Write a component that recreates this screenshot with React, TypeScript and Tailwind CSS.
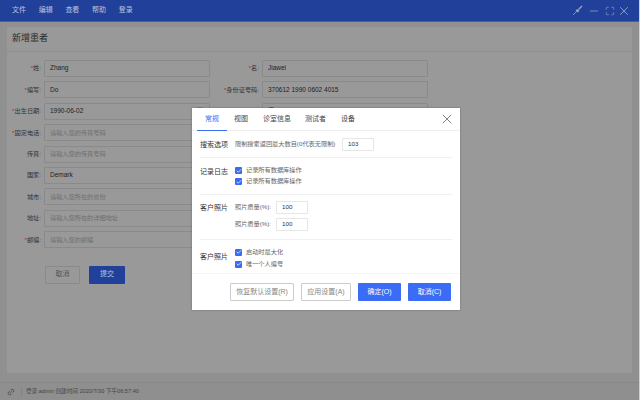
import { Minus, X, Maximize, Link2, Check, Calendar } from 'lucide-react';

const menus = ['文件', '编辑', '查看', '帮助', '登录'];

interface FieldProps {
  label: string;
  required?: boolean;
  value?: string;
  placeholder?: string;
  calendar?: boolean;
}

function FieldInput({ value, placeholder, calendar }: FieldProps) {
  return (
    <div className="ml-[3px] w-[166px] h-[17px] border border-[#8a8a8a] rounded-[1px] bg-[#999] flex items-center px-[5px] leading-none">
      {value ? (
        <span className="text-[6.5px] text-[#222]">{value}</span>
      ) : (
        <span className="text-[6.2px] text-[#6e6e6e]">{placeholder}</span>
      )}
      {calendar && <Calendar className="ml-auto w-[8px] h-[8px] text-[#555]" />}
    </div>
  );
}

function Field(props: FieldProps) {
  return (
    <div className="flex items-center h-[17px]">
      <div className="w-[34px] shrink-0 flex justify-end text-[6.2px] text-[#333] whitespace-nowrap leading-none">
        {props.required && <span className="text-[#c02020]">*</span>}
        <span>{props.label}:</span>
      </div>
      <FieldInput {...props} />
    </div>
  );
}

function RightField(props: FieldProps) {
  return (
    <div className="flex items-center h-[17px]">
      <div className="w-[49px] shrink-0 flex justify-end text-[6.2px] text-[#333] whitespace-nowrap leading-none">
        {props.required && <span className="text-[#c02020]">*</span>}
        <span>{props.label}:</span>
      </div>
      <FieldInput {...props} />
    </div>
  );
}

function Box({ label }: { label: string }) {
  return (
    <div className="flex items-center gap-[4px] h-[7px]">
      <span className="w-[7px] h-[7px] rounded-[1px] bg-[#3a6cf0] flex items-center justify-center">
        <Check className="w-[6px] h-[6px] text-white" strokeWidth={3} />
      </span>
      <span className="text-[6.2px] text-[#666] leading-none">{label}</span>
    </div>
  );
}

function NumInput({ value }: { value: string }) {
  return (
    <div className="w-[32px] h-[13px] border border-[#e6e6e6] rounded-[1px] flex items-center px-[5px] text-[6.2px] text-[#333] leading-none">
      {value}
    </div>
  );
}

export default function App() {
  return (
    <div className='relative w-[640px] h-[400px] overflow-hidden flex flex-col bg-[#909090] border-r border-[#d0d0d0] font-["Liberation_Sans","Noto_Sans_CJK_SC",sans-serif]'>
      {/* top bar */}
      <div className="h-[22px] shrink-0 bg-[#21409a] flex items-center pl-[12px] pr-[8.5px] border-b border-[#4a5f9c]">
        <div className="flex gap-[12.7px] text-[7px] text-[#b8c3de]">
          {menus.map((m) => (
            <span key={m}>{m}</span>
          ))}
        </div>
        <div className="ml-auto flex items-center text-[#9aa7c8]">
          <svg viewBox="0 0 11 11" className="w-[11px] h-[11px]" fill="none" stroke="currentColor">
            <path d="M1 10 L4.5 6.5" strokeWidth="0.8" />
            <path d="M4 5 L6 7 M5 4.5 L7 6.5" strokeWidth="1.2" />
            <path d="M6.5 4.5 L10 1" strokeWidth="1.2" />
          </svg>
          <Minus className="ml-[5.5px] w-[12px] h-[12px]" strokeWidth={1.5} />
          <Maximize className="ml-[4.5px] w-[10px] h-[10px]" strokeWidth={1.5} />
          <X className="ml-[2px] w-[14px] h-[14px]" strokeWidth={1.5} />
        </div>
      </div>

      {/* form card */}
      <div className="flex-1 pl-[7px] pr-[7px] pt-[5px] pb-[9px]">
        <div className="h-full bg-[#999999]">
          <div className="h-[25px] flex items-center pl-[5px] border-b border-[#8e8e8e] text-[9px] text-[#2a2a2a]">
            新增患者
          </div>
          <div className="flex pt-[8px]">
            <div className="flex flex-col gap-[4.4px]">
              <Field label="姓" required value="Zhang" />
              <Field label="编写" required value="Do" />
              <Field label="出生日期" required value="1990-06-02" calendar />
              <Field label="固定电话" required placeholder="请输入您的传真号码" />
              <Field label="传真" placeholder="请输入您的传真号码" />
              <Field label="国家" value="Demark" />
              <Field label="城市" placeholder="请输入您所在的省份" />
              <Field label="地址" placeholder="请输入您所在的详细地址" />
              <Field label="邮编" required placeholder="请输入您的邮编" />
              <div className="flex gap-[9px] ml-[38px] mt-[13px]">
                <div className="w-[35px] h-[18px] border border-[#8a8a8a] rounded-[1px] flex items-center justify-center text-[7px] text-[#555]">
                  取消
                </div>
                <div className="w-[36px] h-[18px] bg-[#21409a] rounded-[1px] flex items-center justify-center text-[7px] text-[#b8c3de]">
                  提交
                </div>
              </div>
            </div>
            <div className="flex flex-col gap-[4.4px]">
              <RightField label="名" required value="Jiawei" />
              <RightField label="身份证号码" required value="370612 1990 0602 4015" />
              <RightField label="性别" required value="男" />
            </div>
          </div>
        </div>
      </div>

      {/* status bar */}
      <div className="h-[18px] shrink-0 bg-[#8f8f8f] border-t border-[#888888] flex items-center pl-[7px] text-[5.6px] text-[#444]">
        <Link2 className="w-[8px] h-[8px] -rotate-45 text-[#444]" strokeWidth={2} />
        <span className="ml-[6px] w-px h-[8px] bg-[#848484]" />
        <span className="ml-[4px]">登录:admin 创建时间 2020/7/30 下午06:57:40</span>
      </div>

      {/* settings dialog */}
      <div className="absolute left-[192px] top-[108px] w-[268px] h-[202px] bg-white flex flex-col shadow-[0_0_2px_rgba(0,0,0,0.3)]">
        <div className="h-[23px] shrink-0 flex items-stretch pl-[5px] pr-[5px] border-b border-[#eeeeee] text-[7px] text-[#444]">
          <span className="w-[30px] h-[23px] flex items-center justify-center text-[#3a6cf0] border-b-[1.5px] border-[#3a6cf0]">常规</span>
          <span className="ml-[7px] flex items-center">视图</span>
          <span className="ml-[15px] flex items-center">诊室信息</span>
          <span className="ml-[14px] flex items-center">测试者</span>
          <span className="ml-[15px] flex items-center">设备</span>
          <X className="ml-auto self-center w-[16px] h-[16px] text-[#444]" strokeWidth={1} />
        </div>

        <div className="flex-1 px-[8px]">
          <div className="flex items-center h-[27px] border-b border-[#f0f0f0]">
            <span className="w-[35px] text-[7px] text-[#333] leading-none">搜索选项</span>
            <span className="w-[107px] text-[6.2px] text-[#666] leading-none whitespace-nowrap">限制搜索返回最大数目(0代表无限制)</span>
            <NumInput value="103" />
          </div>
          <div className="flex items-center h-[37px] border-b border-[#f0f0f0]">
            <span className="w-[35px] text-[7px] text-[#333] leading-none -mt-[10px]">记录日志</span>
            <div className="flex flex-col gap-[4px]">
              <Box label="记录所有数据库操作" />
              <Box label="记录所有数据库操作" />
            </div>
          </div>
          <div className="flex h-[45px] pt-[6px] border-b border-[#f0f0f0]">
            <span className="w-[35px] text-[7px] text-[#333] leading-none mt-[3px]">客户照片</span>
            <div className="flex flex-col gap-[4px]">
              <div className="flex items-center">
                <span className="w-[41px] text-[6.2px] text-[#666] leading-none">照片质量(%):</span>
                <NumInput value="100" />
              </div>
              <div className="flex items-center">
                <span className="w-[41px] text-[6.2px] text-[#666] leading-none">照片质量(%):</span>
                <NumInput value="100" />
              </div>
            </div>
          </div>
          <div className="flex items-center h-[33px]">
            <span className="w-[35px] text-[7px] text-[#333] leading-none">客户照片</span>
            <div className="flex flex-col gap-[5px] mt-[3px]">
              <Box label="启动时最大化" />
              <Box label="唯一个人编号" />
            </div>
          </div>
        </div>

        <div className="h-[37px] shrink-0 border-t border-[#f5f5f5] flex items-center justify-end gap-[7px] pr-[9px] text-[7px]">
          <div className="w-[64px] h-[18px] border border-[#ccc] rounded-[1px] flex items-center justify-center text-[#888] whitespace-nowrap">恢复默认设置(R)</div>
          <div className="w-[50px] h-[18px] border border-[#ccc] rounded-[1px] flex items-center justify-center text-[#888] whitespace-nowrap">应用设置(A)</div>
          <div className="w-[43px] h-[18px] bg-[#3a6cf5] rounded-[1px] flex items-center justify-center text-white">确定(O)</div>
          <div className="w-[43px] h-[18px] bg-[#3a6cf5] rounded-[1px] flex items-center justify-center text-white">取消(C)</div>
        </div>
      </div>
    </div>
  );
}
